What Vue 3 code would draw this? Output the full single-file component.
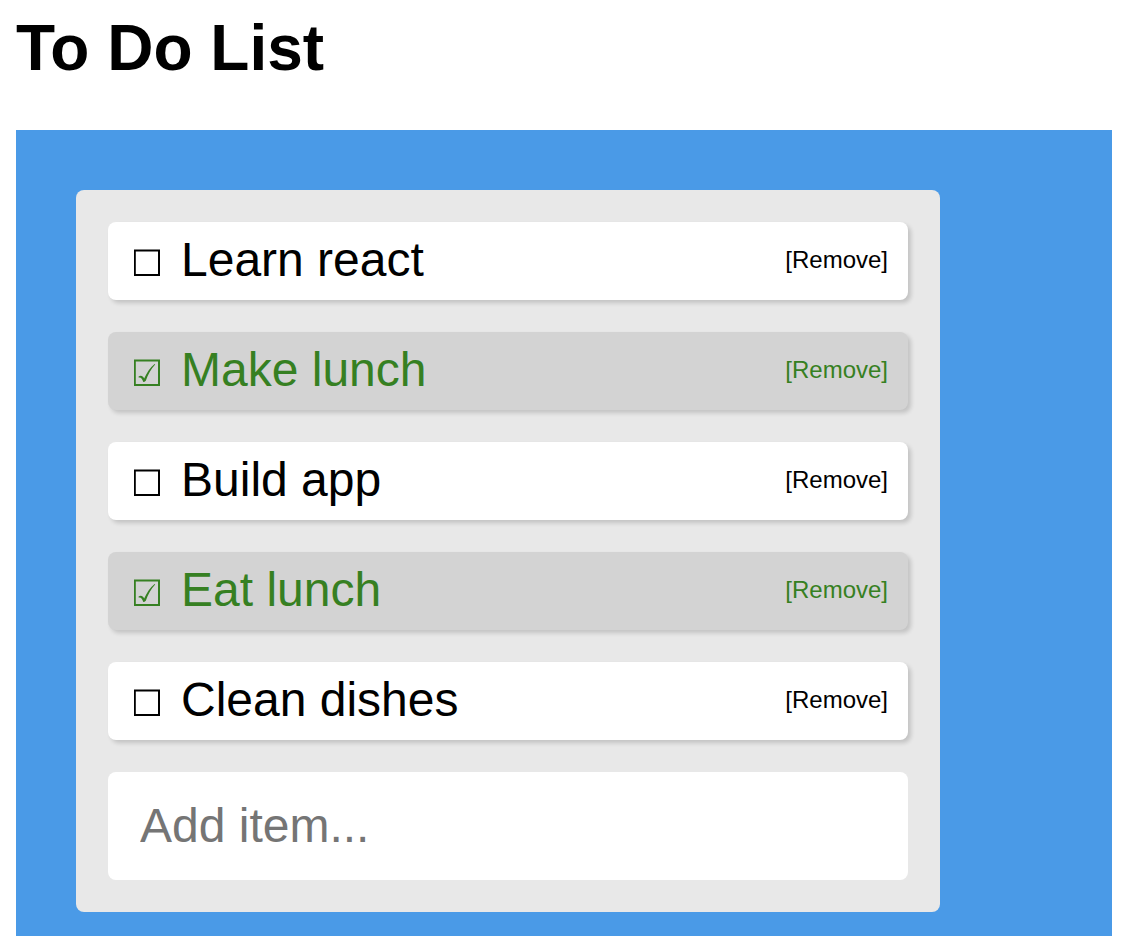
<script setup>
import { ref } from 'vue'

const items = ref([
  { id: 1, text: 'Learn react', done: false },
  { id: 2, text: 'Make lunch', done: true },
  { id: 3, text: 'Build app', done: false },
  { id: 4, text: 'Eat lunch', done: true },
  { id: 5, text: 'Clean dishes', done: false }
])
const draft = ref('')
let nextId = 6

function addItem() {
  const text = draft.value.trim()
  if (!text) return
  items.value.push({ id: nextId++, text, done: false })
  draft.value = ''
}

function removeItem(id) {
  items.value = items.value.filter((item) => item.id !== id)
}
</script>

<template>
  <main class="page">
    <h1 class="title">To Do List</h1>
    <section class="board">
      <div class="panel">
        <ul class="list">
          <li v-for="item in items" :key="item.id" class="item" :class="{ done: item.done }">
            <label class="toggle">
              <input v-model="item.done" class="check" type="checkbox" />
              <svg class="box" viewBox="0 0 26 27" aria-hidden="true">
                <path d="M0.8 1.4H25V26H0.8Z" fill="none" stroke="currentColor" stroke-width="2" />
                <path
                  v-if="item.done"
                  d="M4.6 17.6C6.8 16 8.8 16.8 10.2 19.6C12.6 13.8 16 8.6 20.6 5L21.2 5.6C17 10.2 13.9 15.6 11.8 21.8C11 22.6 10.2 23 9.3 23C8.4 20 7 18 4.6 18.5Z"
                  fill="currentColor"
                />
              </svg>
              <span>{{ item.text }}</span>
            </label>
            <button class="remove" type="button" @click="removeItem(item.id)">[Remove]</button>
          </li>
        </ul>
        <form @submit.prevent="addItem">
          <input v-model="draft" class="add" type="text" placeholder="Add item..." aria-label="Add item" />
        </form>
      </div>
    </section>
  </main>
</template>

<style>
body {
  background: #fff;
}
</style>

<style scoped>
.page {
  padding: 12px 16px 0;
  color: #000;
  font-family: "Liberation Sans", Arial, sans-serif;
}

.title {
  margin: 0 0 46px;
  font-size: 64px;
  line-height: 72px;
}

.board {
  padding: 60px 60px 24px;
  background: #4a9ae7;
}

.panel {
  box-sizing: border-box;
  max-width: 864px;
  padding: 32px;
  border-radius: 8px;
  background: #e8e8e8;
}

.list {
  margin: 0;
  padding: 0;
  list-style: none;
}

.item {
  display: flex;
  align-items: center;
  justify-content: space-between;
  margin-bottom: 32px;
  padding: 11px 20px 13px 26px;
  border-radius: 8px;
  background: #fff;
  box-shadow: 3px 3px 4px rgba(0, 0, 0, 0.16);
}

.done {
  background: #d3d3d3;
  color: #368022;
}

.toggle {
  position: relative;
  display: flex;
  align-items: baseline;
  gap: 21px;
  font-size: 48px;
  line-height: 54px;
  cursor: pointer;
}

.check {
  position: absolute;
  inset: 0;
  margin: 0;
  opacity: 0;
  cursor: pointer;
}

.box {
  flex: none;
  width: 26px;
  height: 27px;
}

.remove {
  padding: 0;
  border: 0;
  background: none;
  color: inherit;
  font: inherit;
  font-size: 24px;
  line-height: 28px;
  cursor: pointer;
}

.add {
  display: block;
  box-sizing: border-box;
  width: 100%;
  padding: 27px 32px;
  border: 0;
  border-radius: 8px;
  outline: 0;
  background: #fff;
  color: #000;
  font: inherit;
  font-size: 48px;
  line-height: 54px;
}

.add::placeholder {
  color: #757575;
  opacity: 1;
}
</style>
